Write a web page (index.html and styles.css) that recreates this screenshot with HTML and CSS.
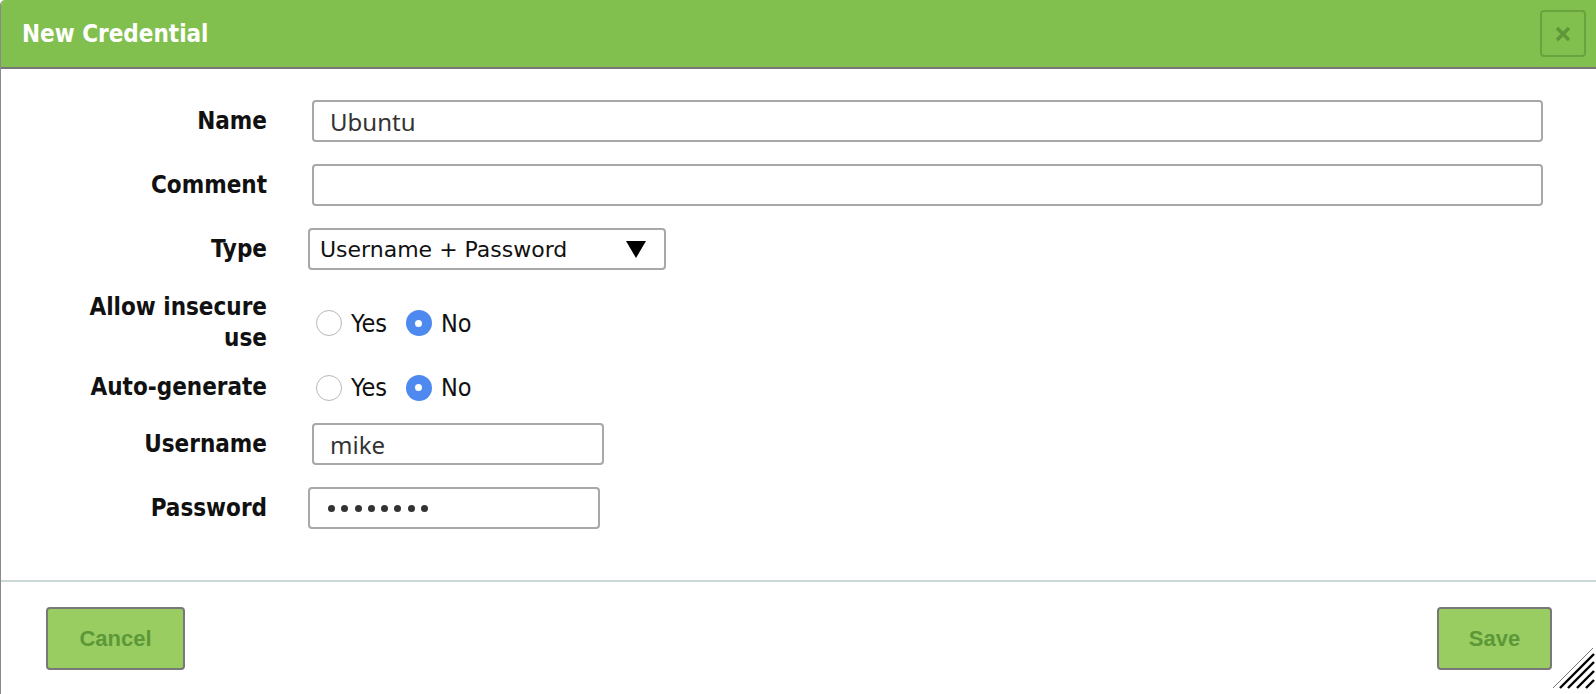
FILE: index.html
```html
<!DOCTYPE html>
<html>
<head>
<meta charset="utf-8">
<link rel="stylesheet" href="styles.css">
</head>
<body>
<div class="dialog">
  <div class="header">
    <div class="title">New Credential</div>
    <button class="close" type="button" aria-label="Close">
      <svg width="16" height="16" viewBox="0 0 16 16"><path d="M2 2 L14 14 M14 2 L2 14" stroke="#5e9638" stroke-width="3.4" stroke-linecap="butt"/></svg>
    </button>
  </div>
  <div class="body">
    <div class="row">
      <div class="label">Name</div>
      <div class="field"><div class="input wide">Ubuntu</div></div>
    </div>
    <div class="row">
      <div class="label">Comment</div>
      <div class="field"><div class="input wide"></div></div>
    </div>
    <div class="row">
      <div class="label">Type</div>
      <div class="field shift">
        <div class="select"><span>Username + Password</span>
          <svg class="arrow" width="22" height="18" viewBox="0 0 22 18"><path d="M1 1 H21 L11 18 Z" fill="#000"/></svg>
        </div>
      </div>
    </div>
    <div class="row">
      <div class="label">Allow insecure<br>use</div>
      <div class="field radios">
        <span class="radio"></span><span class="rtext">Yes</span>
        <span class="radio on"></span><span class="rtext">No</span>
      </div>
    </div>
    <div class="row tight">
      <div class="label">Auto-generate</div>
      <div class="field radios">
        <span class="radio"></span><span class="rtext">Yes</span>
        <span class="radio on"></span><span class="rtext">No</span>
      </div>
    </div>
    <div class="row tight2">
      <div class="label">Username</div>
      <div class="field"><div class="input small">mike</div></div>
    </div>
    <div class="row">
      <div class="label">Password</div>
      <div class="field shift"><div class="input small pw"><i></i><i></i><i></i><i></i><i></i><i></i><i></i><i></i></div></div>
    </div>
  </div>
  <div class="footer">
    <button class="btn cancel" type="button">Cancel</button>
    <button class="btn save" type="button">Save</button>
  </div>
  <svg class="grip" width="46" height="46" viewBox="0 0 46 46">
    <line x1="3" y1="42" x2="43" y2="2" stroke="#666" stroke-width="0.9"/>
    <line x1="10" y1="42" x2="44" y2="8" stroke="#000" stroke-width="2.4"/>
    <line x1="18" y1="42" x2="44" y2="16" stroke="#000" stroke-width="2.4"/>
    <line x1="27" y1="42" x2="44" y2="25" stroke="#000" stroke-width="2.4"/>
    <line x1="36" y1="42" x2="44" y2="34" stroke="#000" stroke-width="2.4"/>
  </svg>
</div>
</body>
</html>
```

FILE: styles.css
```css
html, body {
  margin: 0;
  padding: 0;
  background: #ffffff;
}
body {
  width: 1596px;
  height: 694px;
  overflow: hidden;
}
.dialog {
  position: relative;
  width: 1596px;
  height: 694px;
  box-sizing: border-box;
  border-left: 1px solid #8a8a8a;
  border-top-left-radius: 5px;
  overflow: hidden;
  background: #fff;
  display: flex;
  flex-direction: column;
}
.header {
  height: 69px;
  background: #81c04e;
  border-bottom: 2px solid #777;
  display: flex;
  align-items: center;
  justify-content: space-between;
  padding: 0 10px 0 21px;
  box-sizing: border-box;
  flex: none;
}
.title {
  font-family: "DejaVu Sans Condensed", "DejaVu Sans", sans-serif;
  font-weight: bold;
  font-size: 24px;
  color: #fff;
}
.close {
  width: 46px;
  height: 47px;
  border: 2px solid #6aa23d;
  border-radius: 4px;
  background: transparent;
  padding: 0;
  display: flex;
  align-items: center;
  justify-content: center;
}
.body {
  flex: none;
  padding: 31px 0 51px 0;
  display: flex;
  flex-direction: column;
  gap: 22px;
  border-bottom: 2px solid #ccd8d8;
}
.row {
  display: flex;
  align-items: center;
}
.row.tight {
  margin-top: -4px;
}
.row.tight2 {
  margin-top: -2px;
}
.label {
  width: 266px;
  text-align: right;
  font-family: "DejaVu Sans Condensed", "DejaVu Sans", sans-serif;
  font-weight: bold;
  font-size: 24px;
  color: #111;
  line-height: 31px;
  flex: none;
}
.field {
  padding-left: 45px;
  flex: 1;
  display: flex;
  align-items: center;
}
.field.shift {
  padding-left: 41px;
}
.input {
  height: 42px;
  box-sizing: border-box;
  border: 2px solid #a8a8a8;
  border-radius: 4px;
  padding: 0 15px 0 16px;
  font-family: "Noto Sans", sans-serif;
  font-size: 24px;
  color: #333;
  display: flex;
  align-items: center;
}
.input.wide {
  width: 1231px;
}
.input.small {
  width: 292px;
}
.input.pw {
  padding-left: 18px;
  gap: 6.3px;
}
.input.pw i {
  display: block;
  width: 7px;
  height: 7px;
  border-radius: 50%;
  background: #333;
}
.select {
  width: 358px;
  height: 42px;
  box-sizing: border-box;
  border: 2px solid #a8a8a8;
  border-radius: 4px;
  padding: 0 17px 0 10px;
  font-family: "DejaVu Sans", sans-serif;
  font-size: 22px;
  color: #111;
  display: flex;
  align-items: center;
  justify-content: space-between;
}
.arrow {
  display: block;
}
.radios {
  padding-left: 49px;
}
.radio {
  width: 26px;
  height: 26px;
  box-sizing: border-box;
  border-radius: 50%;
  border: 1px solid #b8b8b8;
  background: #fff;
  flex: none;
  position: relative;
}
.radio.on {
  border: none;
  background: #4d89ee;
}
.radio.on::after {
  content: "";
  position: absolute;
  left: 9.5px;
  top: 9.5px;
  width: 7px;
  height: 7px;
  border-radius: 50%;
  background: #fff;
}
.rtext {
  font-family: "DejaVu Sans Condensed", "DejaVu Sans", sans-serif;
  font-size: 25px;
  color: #111;
  margin-left: 9px;
  margin-right: 19px;
}
.footer {
  flex: 1;
  display: flex;
  justify-content: space-between;
  align-items: flex-start;
  padding: 25px 44px 0 45px;
  box-sizing: border-box;
}
.btn {
  height: 63px;
  border: 2px solid #787878;
  border-radius: 4px;
  background: #99cd62;
  color: #5c9838;
  font-family: "Liberation Sans", Arial, sans-serif;
  font-weight: bold;
  font-size: 22px;
  padding: 0;
}
.cancel {
  width: 139px;
}
.save {
  width: 115px;
}
.grip {
  position: absolute;
  right: 0;
  bottom: 2px;
}
```
